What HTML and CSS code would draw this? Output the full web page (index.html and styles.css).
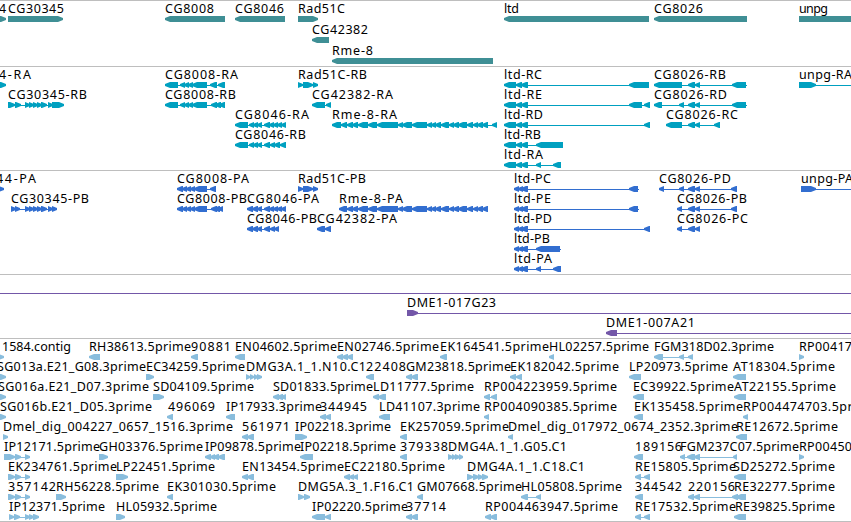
FILE: index.html
```html
<!DOCTYPE html>
<html lang="en">
<head>
    <meta charset="UTF-8">
    <meta name="viewport" content="width=device-width, initial-scale=1.0">
    <title>Genome Browser</title>
    <link rel="stylesheet" href="styles.css">
</head>
<body>
    <div class="browser">
        <svg class="track genes" id="genes"></svg>
        <svg class="track transcripts" id="transcripts"></svg>
        <svg class="track proteins" id="proteins"></svg>
        <svg class="track clones" id="clones"></svg>
        <svg class="track ests" id="ests"></svg>
    </div>

    <script src="script.js"></script>
</body>
</html>
```
FILE: styles.css
```css
body {
    margin: 0;
    background-color: #fff;
    overflow: hidden;
}
.browser {
    display: flex;
    flex-direction: column;
    width: 851px;
    height: 521px;
    border-bottom: 1px solid #bebebe;
}
.track {
    display: block;
    width: 100%;
    box-sizing: border-box;
    border-top: 1px solid #bebebe;
    overflow: hidden;
    flex: none;
}
.track text {
    font-family: "Noto Sans", sans-serif;
    font-size: 12.5px;
    fill: #000;
}
.genes {
    height: 66px;
    color: #3f8f95;
}
.transcripts {
    height: 104px;
    color: #00a0c0;
}
.proteins {
    height: 104px;
    color: #326ed0;
}
.clones {
    height: 64px;
    color: #7357a8;
}
.ests {
    height: 183px;
    color: #89bddd;
}
```
FILE: script.js
```js
const SVG_NS = "http://www.w3.org/2000/svg";

// [label, label start, label end, row, strand, exons, line end]
const ltdExons = [[504, 516], [516, 522], [521, 528]];
const ltdCds = [[514, 519], [518, 523], [521, 528]];
const rmeExons = [[341, 347], [347, 353], [352, 358], [358, 368], [368, 377], [377, 398], [398, 403],
    [402, 412], [412, 427], [427, 432], [431, 436], [435, 441], [441, 449], [449, 454], [453, 459],
    [458, 467], [467, 473], [473, 478], [477, 483], [482, 488]];
const estStart = [[8, 15], [15, 21], [25, 30]];

const tracks = {
    genes: { step: 21, features: [
        ["4", -1, 7, 0, "+", [[-10, 6]]],
        ["CG30345", 8, 64, 0, "+", [[8, 63]]],
        ["CG8008", 165, 214, 0, "-", [[165, 225]]],
        ["CG8046", 235, 284, 0, "-", [[235, 285]]],
        ["Rad51C", 298, 345, 0, "+", [[298, 318]]],
        ["CG42382", 312, 368, 1, "-", [[312, 329]]],
        ["Rme-8", 332, 373, 2, "-", [[332, 493]]],
        ["ltd", 504, 519, 0, "-", [[504, 649]]],
        ["CG8026", 654, 703, 0, "-", [[654, 747]]],
        ["unpg", 799, 828, 0, "+", [[799, 900]]]
    ]},
    transcripts: { step: 20, features: [
        ["4-RA", -1, 31, 0, "+", [[-10, 6]]],
        ["CG30345-RB", 8, 87, 1, "+", [[8, 15], [15, 21], [25, 30], [29, 34], [33, 38], [37, 42], [41, 47], [48, 53], [52, 64]]],
        ["CG8008-RA", 165, 238, 0, "-", [[165, 178], [180, 185], [184, 189], [188, 193], [192, 207], [210, 217], [218, 225]]],
        ["CG8008-RB", 165, 236, 1, "-", [[165, 178], [180, 185], [184, 189], [188, 193], [192, 207], [211, 217], [215, 221], [219, 225]]],
        ["CG8046-RA", 235, 309, 2, "-", [[235, 248], [249, 254], [253, 258], [257, 262], [264, 270], [269, 274], [273, 278], [277, 282], [281, 286]]],
        ["CG8046-RB", 235, 306, 3, "-", [[235, 248], [249, 254], [253, 258], [257, 262], [264, 270], [270, 275], [274, 280], [280, 286]]],
        ["Rad51C-RB", 298, 367, 0, "+", [[298, 303], [303, 313], [313, 318]]],
        ["CG42382-RA", 312, 393, 1, "-", [[312, 325], [326, 331]]],
        ["Rme-8-RA", 332, 397, 2, "-", [[332, 341], ...rmeExons, [492, 497]]],
        ["ltd-RC", 504, 542, 0, "-", [...ltdExons, [629, 649]]],
        ["ltd-RE", 504, 542, 1, "-", [...ltdExons, [629, 642], [644, 650]]],
        ["ltd-RD", 504, 543, 2, "-", [...ltdExons, [644, 650]]],
        ["ltd-RB", 504, 541, 3, "-", [...ltdExons, [536, 563]]],
        ["ltd-RA", 504, 543, 4, "-", [...ltdExons, [536, 541], [553, 561]]],
        ["CG8026-RB", 654, 726, 0, "-", [[654, 682], [688, 695], [695, 700], [732, 746]], 747],
        ["CG8026-RD", 654, 727, 1, "-", [[654, 662], [679, 684], [688, 695], [695, 700], [732, 746]], 747],
        ["CG8026-RC", 666, 738, 2, "-", [[666, 682], [688, 695], [695, 700], [714, 720]]],
        ["unpg-RA", 799, 852, 0, "+", [[799, 816]], 900]
    ]},
    proteins: { step: 20, features: [
        ["44-PA", -4, 36, 0, "+", [[-8, 4]]],
        ["CG30345-PB", 11, 89, 1, "+", [[11, 16], [15, 20], [25, 30], [29, 34], [33, 38], [37, 42], [41, 47], [48, 53], [52, 57]]],
        ["CG8008-PA", 177, 249, 0, "-", [[177, 183], [182, 187], [186, 191], [190, 195], [194, 207], [210, 216]]],
        ["CG8008-PB", 177, 247, 1, "-", [[177, 183], [182, 187], [186, 191], [190, 195], [194, 207], [211, 217], [214, 220], [218, 223]]],
        ["CG8046-PA", 247, 319, 1, "-", [[247, 253], [252, 258], [257, 262], [264, 270], [269, 274], [273, 278], [277, 282], [281, 286]]],
        ["CG8046-PB", 247, 317, 2, "-", [[247, 253], [252, 258], [257, 262], [264, 270], [270, 275], [274, 279]]],
        ["Rad51C-PB", 298, 366, 0, "+", [[298, 303], [303, 313], [313, 318]]],
        ["Rme-8-PA", 339, 403, 1, "-", [[339, 347], ...rmeExons.slice(1)]],
        ["CG42382-PA", 317, 397, 2, "-", [[317, 325], [325, 331]]],
        ["ltd-PC", 514, 551, 0, "-", [...ltdCds, [629, 638]], 639],
        ["ltd-PE", 514, 551, 1, "-", [...ltdCds, [629, 638]], 639],
        ["ltd-PD", 514, 552, 2, "-", [...ltdCds, [644, 650]]],
        ["ltd-PB", 514, 550, 3, "-", [...ltdCds, [536, 560]], 561],
        ["ltd-PA", 514, 552, 4, "-", [...ltdCds, [536, 541], [553, 561]]],
        ["CG8026-PD", 659, 731, 0, "-", [[659, 664], [679, 684], [688, 695], [695, 700], [731, 737]]],
        ["CG8026-PB", 677, 747, 1, "-", [[677, 682], [688, 695], [695, 700], [731, 737]]],
        ["CG8026-PC", 677, 748, 2, "-", [[677, 682], [688, 695], [695, 700]]],
        ["unpg-PA", 801, 853, 0, "+", [[801, 816]], 900]
    ]},
    clones: { step: 20, features: [
        ["", 0, 0, 0, "+", [[-20, -10]], 900],
        ["DME1-017G23", 407, 496, 1, "+", [[407, 418]], 900],
        ["DME1-007A21", 606, 695, 2, "-", [[606, 617]], 900]
    ]},
    ests: { step: 20, features: [
        ["1584.contig", 2, 71, 0, "+", [[-5, 4]]],
        ["RH38613.5prime", 89, 191, 0, "-", [[89, 100]]],
        ["90881", 191, 231, 0, "-", [[191, 198]]],
        ["EN04602.5prime", 235, 337, 0, "-", [[235, 245]]],
        ["EN02746.5prime", 337, 439, 0, "-", [[337, 343], [342, 348], [347, 353]]],
        ["EK164541.5prime", 440, 549, 0, "-", [[440, 447]]],
        ["HL02257.5prime", 549, 649, 0, "-", [[549, 554]]],
        ["FGM318D02.3prime", 654, 774, 0, "-", [[654, 663], [679, 684], [688, 693]]],
        ["RP00417", 799, 852, 0, "+", [[799, 804]]],

        ["SG013a.E21_G08.3prime", -3, 146, 1, "+", [[-5, 6]]],
        ["EC34259.5prime", 146, 245, 1, "+", [[146, 154]]],
        ["DMG3A.1_1.N10.C1", 246, 366, 1, "+", [[246, 250], [250, 254], [254, 258], [257, 262]]],
        ["22408", 366, 406, 1, "-", [[366, 374]]],
        ["GM23818.5prime", 406, 511, 1, "-", [[406, 412], [411, 418]]],
        ["EK182042.5prime", 510, 619, 1, "-", [[510, 516], [516, 522]]],
        ["LP20973.5prime", 629, 728, 1, "-", [[629, 641]]],
        ["AT18304.5prime", 733, 835, 1, "-", [[733, 746]]],

        ["SG016a.E21_D07.3prime", -2, 149, 2, "+", [[-5, 6]]],
        ["SD04109.5prime", 153, 254, 2, "+", [[153, 164]]],
        ["SD01833.5prime", 273, 373, 2, "-", [[273, 279], [277, 283], [281, 286]]],
        ["LD11777.5prime", 373, 474, 2, "-", [[373, 379], [378, 386]]],
        ["RP004223959.5prime", 484, 617, 2, "-", [[484, 490], [491, 497]]],
        ["EC39922.5prime", 633, 734, 2, "-", [[633, 644]]],
        ["AT22155.5prime", 734, 836, 2, "-", [[734, 746]]],

        ["SG016b.E21_D05.3prime", 0, 152, 3, "+", [[-5, 6]]],
        ["496069", 168, 215, 3, "-", [[167, 173]]],
        ["IP17933.3prime", 226, 322, 3, "-", [[226, 235]]],
        ["344945", 320, 367, 3, "-", [[320, 326], [325, 331]]],
        ["LD41107.3prime", 379, 480, 3, "-", [[379, 390]]],
        ["RP004090385.5prime", 484, 617, 3, "-", [[484, 489]]],
        ["EK135458.5prime", 634, 743, 3, "-", [[634, 643]]],
        ["RP004474703.5prime", 743, 876, 3, "-", [[743, 748]]],

        ["Dmel_dig_004227_0657_1516.3prime", 3, 233, 4, "+", [[3, 8]]],
        ["561971", 242, 290, 4, "-", [[242, 248], [247, 254]]],
        ["IP02218.3prime", 295, 391, 4, "+", [[295, 307]]],
        ["EK257059.5prime", 400, 509, 4, "-", [[400, 407]]],
        ["Dmel_dig_017972_0674_2352.3prime", 508, 738, 4, "-", [[508, 513]]],
        ["RE12672.5prime", 736, 838, 4, "-", [[736, 747]]],

        ["IP12171.5prime", 4, 100, 5, "+", [[4, 15], [15, 21], [25, 30]]],
        ["GH03376.5prime", 99, 203, 5, "+", [[99, 108]]],
        ["IP09878.5prime", 205, 301, 5, "-", [[205, 211], [210, 215], [213, 219], [218, 225]]],
        ["IP02218.5prime", 300, 396, 5, "-", [[300, 313]]],
        ["379338", 400, 448, 5, "-", [[400, 407]]],
        ["DMG4A.1_1.G05.C1", 448, 567, 5, "+", [[448, 453], [452, 456], [455, 460], [459, 463]]],
        ["189156", 635, 682, 5, "-", [[634, 643]]],
        ["FGM237C07.5prime", 680, 799, 5, "-", [[680, 685], [687, 695], [694, 700], [733, 737]]],
        ["RP00450", 799, 852, 5, "+", [[799, 804]]],

        ["EK234761.5prime", 8, 117, 6, "+", estStart],
        ["LP22451.5prime", 116, 215, 6, "+", [[116, 128]]],
        ["EN13454.5prime", 242, 344, 6, "-", [[242, 248], [247, 254]]],
        ["EC22180.5prime", 344, 445, 6, "-", [[344, 350], [349, 354], [353, 358]]],
        ["DMG4A.1_1.C18.C1", 467, 585, 6, "+", [[467, 473], [473, 479], [478, 483], [482, 488]]],
        ["RE15805.5prime", 635, 736, 6, "-", [[635, 641], [644, 650]]],
        ["SD25272.5prime", 733, 835, 6, "-", [[734, 746]]],

        ["357142", 8, 56, 7, "+", estStart],
        ["RH56228.5prime", 56, 159, 7, "+", [[56, 66]]],
        ["EK301030.5prime", 167, 276, 7, "-", [[167, 173]]],
        ["DMG5A.3_1.F16.C1", 298, 414, 7, "+", [[298, 304], [304, 310]]],
        ["GM07668.5prime", 417, 522, 7, "-", [[417, 423]]],
        ["HL05808.5prime", 521, 622, 7, "-", [[521, 528], [536, 541]]],
        ["344542", 635, 682, 7, "-", [[635, 643]]],
        ["220156", 688, 735, 7, "-", [[688, 694], [694, 700], [732, 738]]],
        ["RE32277.5prime", 734, 835, 7, "-", [[736, 746]]],

        ["IP12371.5prime", 9, 105, 8, "+", [[9, 14], [14, 20], [25, 30], [29, 34], [33, 39]]],
        ["HL05932.5prime", 116, 217, 8, "+", [[116, 125]]],
        ["IP02220.5prime", 312, 408, 8, "-", [[312, 325], [325, 331]]],
        ["37714", 406, 446, 8, "-", [[406, 412], [411, 418]]],
        ["RP004463947.5prime", 485, 618, 8, "-", [[485, 491], [490, 497]]],
        ["RE17532.5prime", 635, 736, 8, "-", [[635, 641], [644, 650]]],
        ["RE39825.5prime", 735, 835, 8, "-", [[734, 746]]]
    ]}
};

function addShape(svg, name, attrs) {
    const el = document.createElementNS(SVG_NS, name);
    for (const key in attrs) {
        el.setAttribute(key, attrs[key]);
    }
    svg.appendChild(el);
    return el;
}

// box with a pointed end in the direction of the strand
function exonPoints(start, end, y, strand) {
    const tip = Math.min(end - start, 5);
    if (strand === "+") {
        return `${start},${y} ${end - tip},${y} ${end},${y + 2} ${end},${y + 4} ${end - tip},${y + 6} ${start},${y + 6}`;
    }
    return `${end},${y} ${start + tip},${y} ${start},${y + 2} ${start},${y + 4} ${start + tip},${y + 6} ${end},${y + 6}`;
}

function drawTrack(id) {
    const svg = document.getElementById(id);
    const track = tracks[id];
    for (const [label, x1, x2, row, strand, exons, lineEnd] of track.features) {
        const y = 15 + row * track.step;
        const end = lineEnd || exons[exons.length - 1][1];
        addShape(svg, "rect", { x: exons[0][0], y: y + 3, width: end - exons[0][0], height: 1, fill: "currentColor" });
        for (const [a, b] of exons) {
            addShape(svg, "polygon", { points: exonPoints(a, b, y, strand), fill: "currentColor" });
        }
        if (label) {
            const text = addShape(svg, "text", { x: x1, y: y - 3, textLength: x2 - x1 });
            text.textContent = label;
        }
    }
}

Object.keys(tracks).forEach(drawTrack);
```
